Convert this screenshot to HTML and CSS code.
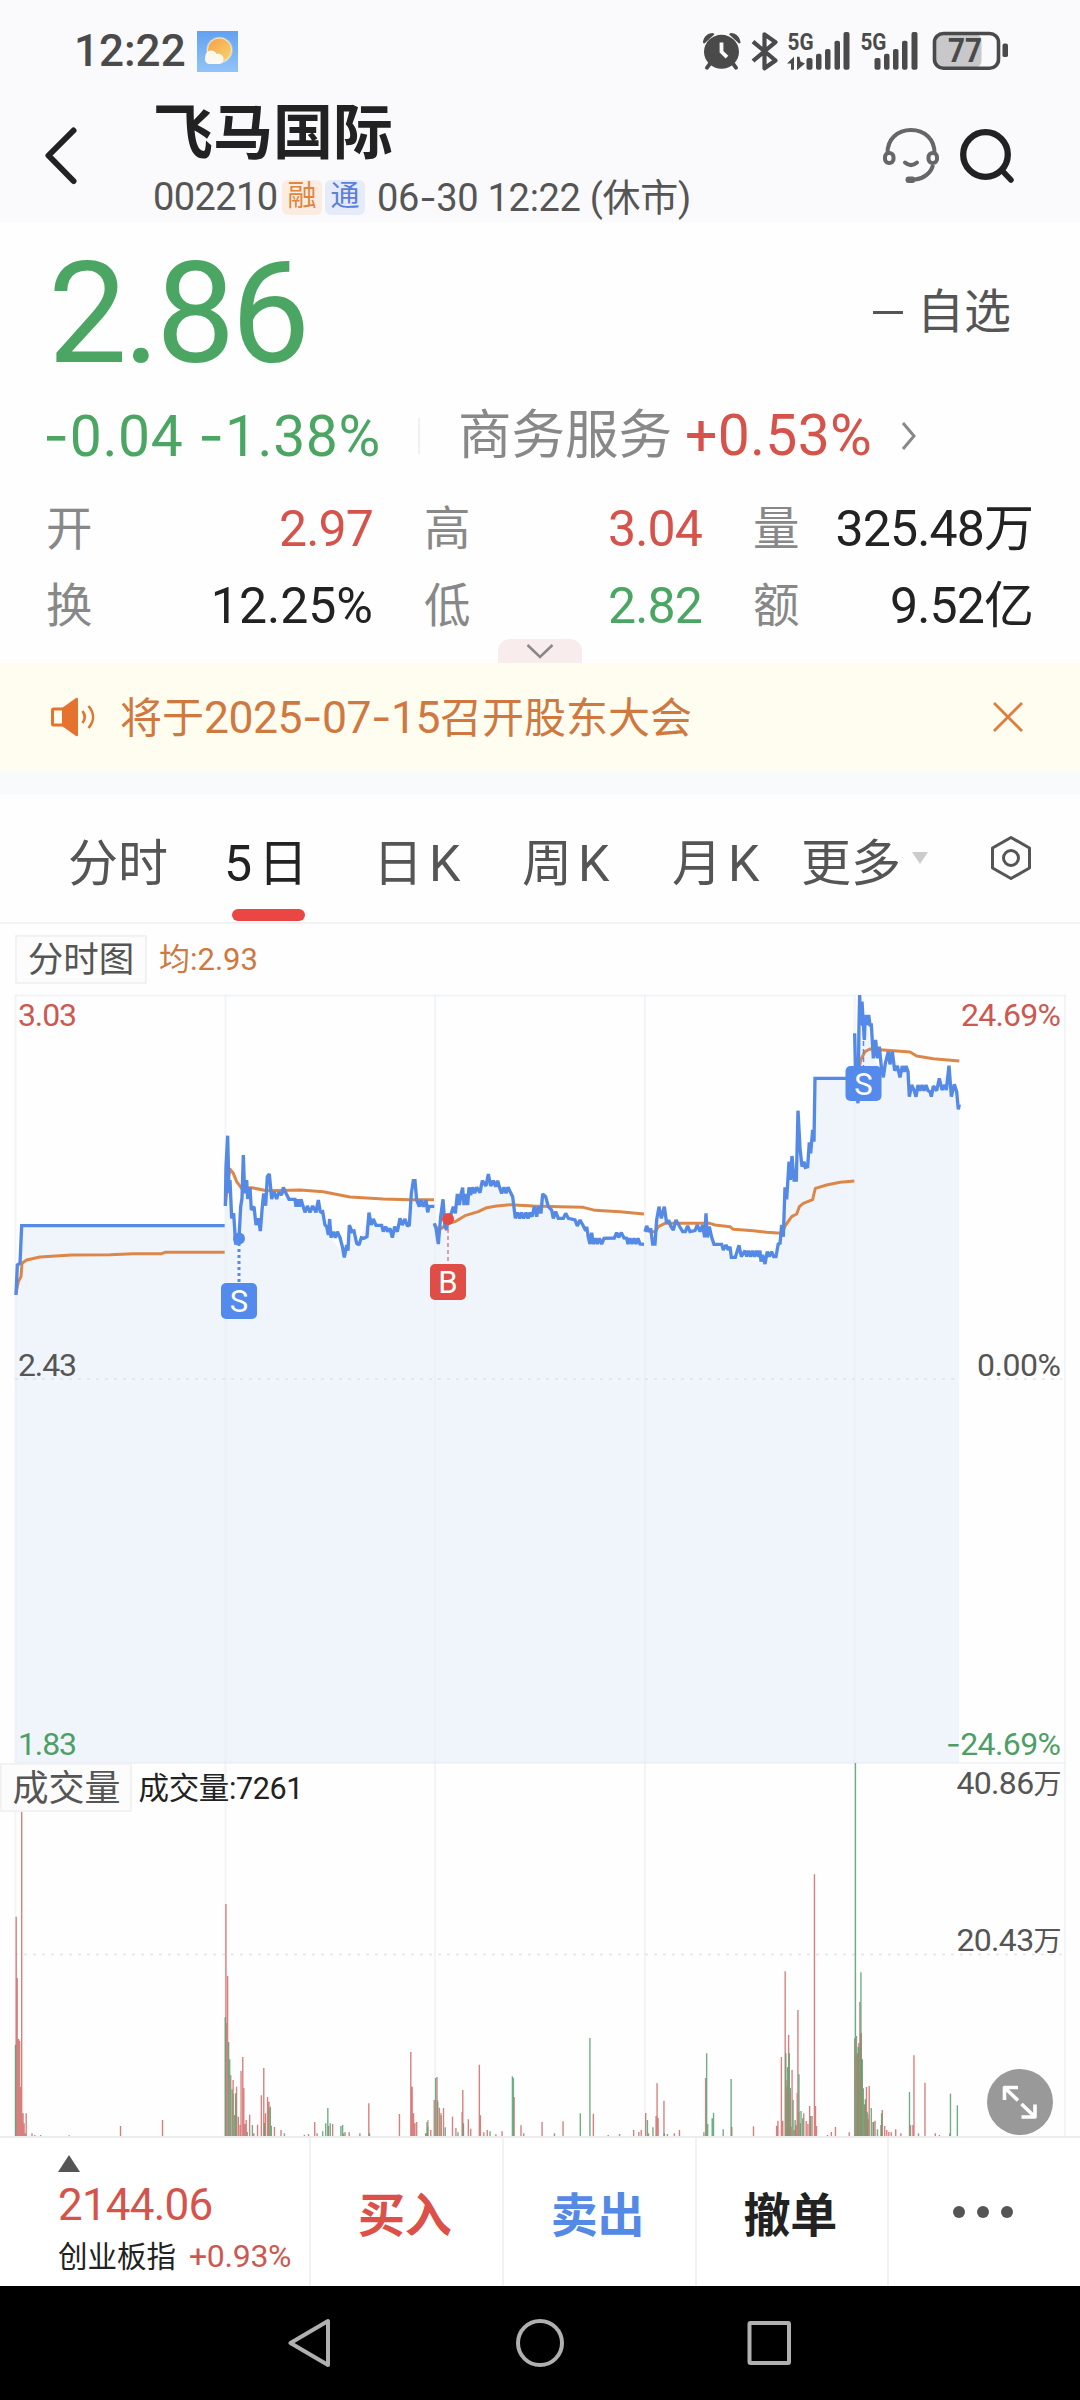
FILE: index.html
```html
<!DOCTYPE html>
<html lang="zh-CN">
<head>
<meta charset="utf-8">
<title>飞马国际 002210</title>
<link rel="stylesheet" href="styles.css">
</head>
<body>
<div class="app">
  <div class="statusbar">
    <span class="clock">12:22</span>
    <svg class="weather" width="41" height="41" viewBox="0 0 41 41">
      <defs>
        <linearGradient id="sky" x1="0" y1="0" x2="0" y2="1"><stop offset="0" stop-color="#62a1f0"/><stop offset="1" stop-color="#93c4f8"/></linearGradient>
        <linearGradient id="sun" x1="0" y1="0" x2="1" y2="1"><stop offset="0" stop-color="#f2a04c"/><stop offset="1" stop-color="#fbd56c"/></linearGradient>
      </defs>
      <rect width="41" height="41" fill="url(#sky)"/>
      <circle cx="22.500" cy="19" r="13.300" fill="#fff" opacity=".35"/>
      <circle cx="22.500" cy="19" r="12" fill="url(#sun)" stroke="#fde9b8" stroke-width="1"/>
      <path d="M12 33a4.500 4.500 0 0 1-4-5c0-5 2-8.500 6-8.500 3 0 4.500 1.500 5.500 3.500 4-1 7 2 7 5 0 3-2 5-5 5z" fill="#fdf8ee"/>
    </svg>
    <svg class="status-icons" width="308" height="71" viewBox="702 15 308 71">
      <g fill="#4a4a4a" transform="scale(1 .968)">
        <circle cx="722.500" cy="53.500" r="17.500"/>
        <path d="M704 44.500c0-6 4-10.500 10-10.500l1.500 1.500-10 9.500zM741.500 44.500c0-6-4-10.500-10-10.500l-1.500 1.500 10 9.500z"/>
        <path d="M711.500 65l-3.500 5M733.500 65l3.500 5" stroke="#4a4a4a" stroke-width="4" stroke-linecap="round"/>
        <path d="M722.500 44v9.500l5.500 5.500" fill="none" stroke="#fafafc" stroke-width="3.800"/>
        <path d="M754 43l22.500 19.500-11 8V35.500l11 8L754 63" fill="none" stroke="#4a4a4a" stroke-width="4.200" stroke-linejoin="round"/>
        <text class="net" x="788.500" y="51.500" textLength="26" lengthAdjust="spacingAndGlyphs">5G</text>
        <text class="net" x="861.500" y="51.500" textLength="26" lengthAdjust="spacingAndGlyphs">5G</text>
        <path d="M788 65.500l7-7v13.500h-3v-6.500zM806 65.500l-8 7V58.500h2.500l1 5z"/>
        <rect x="807.500" y="60" width="6" height="12" rx="2"/><rect x="817" y="55.500" width="5.500" height="16.500" rx="2"/><rect x="826" y="50.500" width="5.500" height="21.500" rx="2"/><rect x="835.500" y="42" width="5.500" height="30" rx="2"/><rect x="844.500" y="33" width="6" height="39" rx="2"/>
        <rect x="875.500" y="60" width="6" height="12" rx="2"/><rect x="885" y="55.500" width="5.500" height="16.500" rx="2"/><rect x="894" y="50.500" width="5.500" height="21.500" rx="2"/><rect x="903" y="42" width="5.500" height="30" rx="2"/><rect x="912.500" y="33" width="6" height="39" rx="2"/>
        <rect x="936" y="35" width="46.500" height="35" rx="7" fill="#c8c8ca"/>
        <rect x="935.500" y="34.500" width="64" height="36" rx="9" fill="none" stroke="#4a4a4a" stroke-width="3.600"/>
        <rect x="1003.500" y="45" width="5.500" height="14" rx="2"/>
        <text class="batt" x="949" y="64.500" textLength="34" lengthAdjust="spacingAndGlyphs">77</text>
      </g>
    </svg>
  </div>

  <header class="header">
    <svg class="back" width="34" height="60" viewBox="44 126 34 60"><path d="M73.500 130.500L48.500 155.500l25 25.500" fill="none" stroke="#222" stroke-width="6" stroke-linecap="round" stroke-linejoin="round"/></svg>
    <div class="heading">
      <h1 class="name">飞马国际</h1>
      <div class="meta"><span class="code">002210</span><span class="tag tag-orange">融</span><span class="tag tag-blue">通</span><span class="stamp">06<span class="dash">-</span>30 12:22 (休市)</span></div>
    </div>
    <svg class="tools" width="134" height="60" viewBox="882 126 134 60">
      <g fill="none" stroke="#666" stroke-width="4">
        <path d="M887.500 153c0-14 10-23 23.500-23s23.500 9 23.500 23"/>
        <rect x="885" y="153" width="8.500" height="10" rx="4"/><rect x="928.500" y="153" width="8.500" height="10" rx="4"/>
        <path d="M905 162.500c4 3.500 8 3.500 12 0" stroke-linecap="round"/>
        <path d="M933 165c-2 8-9 13.500-18 14.500"/>
      </g>
      <rect x="905.500" y="176.500" width="10" height="6.500" rx="3.200" fill="#666"/>
      <circle cx="985.500" cy="154.500" r="22.300" fill="none" stroke="#222" stroke-width="6.300"/>
      <path d="M1002.500 171l8.500 9" stroke="#222" stroke-width="5.500" stroke-linecap="round"/>
    </svg>
  </header>

  <section class="quote">
    <div class="price-row">
      <span class="price">2.86</span>
      <button class="watch"><i class="minus"></i>自选</button>
    </div>
    <div class="change-row">
      <span class="change down"><span class="dash">-</span>0.04 <span class="dash">-</span>1.38%</span>
      <i class="sep"></i>
      <span class="sector">商务服务</span>
      <span class="sector-change up">+0.53%</span>
      <svg width="18" height="32" viewBox="0 0 18 32"><path d="M3 3l11 13L3 29" fill="none" stroke="#888" stroke-width="3"/></svg>
    </div>
    <div class="stats">
      <div class="stat"><span class="label">开</span><span class="value up">2.97</span></div>
      <div class="stat"><span class="label">高</span><span class="value up">3.04</span></div>
      <div class="stat"><span class="label">量</span><span class="value">325.48万</span></div>
      <div class="stat"><span class="label">换</span><span class="value wide">12.25%</span></div>
      <div class="stat"><span class="label">低</span><span class="value down">2.82</span></div>
      <div class="stat"><span class="label">额</span><span class="value">9.52亿</span></div>
    </div>
    <div class="pull"><svg width="30" height="18" viewBox="0 0 30 18"><path d="M2.500 3L15 15 27.500 3" fill="none" stroke="#888" stroke-width="2.500"/></svg></div>
  </section>

  <section class="notice">
    <svg width="46" height="42" viewBox="50 696 46 42">
      <rect x="52.500" y="709" width="12" height="16" rx="1" fill="none" stroke="#e5732f" stroke-width="3"/>
      <path d="M62 708l14-10c1.500-.5 2 0 2 1.500v35c0 1.500-.5 2-2 1.500L62 726z" fill="#e5732f"/>
      <path d="M82.500 711c3 4 3 8 0 12M88.500 706c6 7 6 15 0 22" fill="none" stroke="#e5732f" stroke-width="2.600"/>
    </svg>
    <span class="notice-text">将于<span class="num">2025<span class="dash">-</span>07<span class="dash">-</span>15</span>召开股东大会</span>
    <svg class="close" width="32" height="32" viewBox="0 0 32 32"><path d="M2 2l28 28M30 2L2 30" stroke="#e07c3c" stroke-width="2.800"/></svg>
  </section>

  <nav class="tabs">
    <span class="tab">分时</span>
    <span class="tab active">5<b class="gap"></b>日</span>
    <span class="tab">日<b class="gap"></b>K</span>
    <span class="tab">周<b class="gap"></b>K</span>
    <span class="tab">月<b class="gap"></b>K</span>
    <span class="tab more">更多<i class="caret"></i></span>
    <svg class="gear" width="44" height="48" viewBox="989 834 44 48"><path d="M1011 837.500l18.500 10.500v20L1011 878.500 992.500 868v-20z" fill="none" stroke="#555" stroke-width="3" stroke-linejoin="round"/><circle cx="1011" cy="858" r="7.500" fill="none" stroke="#555" stroke-width="3"/></svg>
  </nav>

  <section class="legend">
    <span class="chip">分时图</span>
    <span class="avg">均:2.93</span>
  </section>

  <section class="chart">
    <svg width="1080" height="1142" viewBox="0 994 1080 1142">
      <g transform="translate(0 980) scale(.33333)" class="area">
        <path d="M46 2349V945L52 855 60 850 65 737H676V2349z"/>
        <path d="M676 2349V640L683 560 690 650 707 790 717 775 730 600 743 657 781 753 797 670 808 585 822 650 867 658 909 680 960 670 990 770 1033 825 1048 740 1075 793 1107 705 1125 736 1175 760 1205 725 1228 737 1240 605 1255 670 1304 679V2349z"/>
      </g>
      <g transform="translate(400 1100) scale(.33333)" class="area">
        <path d="M104 1989V385L115 432 129 310 140 388 172 300 207 275 265 235 330 275 346 350 395 345 428 290 460 350 530 365 570 425 656 412 734 433V1989z"/>
        <path d="M734 1989V395L762 430 777 330 820 380 918 390 942 433 994 465 1095 488 1128 465 1145 390 1155 280 1171 230 1188 240 1194 40 1206 200 1223 200 1242 125 1245-65H1363V1989z"/>
      </g>
      <g transform="translate(740 980) scale(.33333)" class="area">
        <path d="M343 2349V295L358 80 380 130 400 230 430 290 450 230 504 275 515 325 570 335 600 315 627 270 634 345 643 318 657 388V2349z"/>
      </g>

      <g class="grid">
        <path d="M15.500 995V2136M225.500 995V2136M435 995V2136M645 995V2136M854.700 995V2136M1065 995V2136"/>
        <path d="M15 995.500H1066M15 1763H1066"/>
        <path d="M15 1379H958M988 1379H1062M15 1954.500H1062" class="dashed"/>
      </g>

      <g class="avg-line">
        <path transform="translate(0 980) scale(.33333)" d="M48 940L55 905 63 890 66 850 80 840 120 831 215 825 330 824 400 821 485 821 495 817H674M676 675L684 600 690 568 700 580 710 605 725 625 755 623 800 632 900 630 970 635 1000 641 1050 651 1150 657 1230 659H1302"/>
        <path transform="translate(400 1100) scale(.33333)" d="M103 373L112 385 125 385 140 372 165 365 195 347 235 335 260 323 290 318 330 314 400 318 480 320 550 322 585 331 660 335 732 342M735 392L750 392 765 397 775 380 795 370H930L945 375 990 380 1000 388 1060 392 1100 397 1145 400 1157 375 1175 350 1190 342 1198 320 1210 310 1238 299 1241 285 1246 265 1280 255 1320 247 1363 243"/>
        <path transform="translate(740 980) scale(.33333)" d="M347 260L355 280 362 240 375 215 390 207 440 211 510 216 530 228 580 236 658 243"/>
      </g>

      <g class="price-line">
        <path transform="translate(0 980) scale(.33333)" d="M48 945L52 855 60 850 65 737H674"/>
        <path transform="translate(0 980) scale(.33333)" d="M676 678L678 560 683 467 687 640 690 600 695 715 701 700 707 793 717 775 722 680 726 655 730 525 734 640 740 600 743 657 750 622 754 690 762 680 768 735 775 715 781 753 787 680 791 640 797 677 802 590 808 582 815 657 822 635 830 657 836 638 845 645 850 622 858 640 867 658H885L888 680 893 658 898 680 903 658 909 678 915 697 922 678 930 697 938 678 948 697 955 660 961 697 968 695 975 735 980 740 985 765 989 717 993 773 1000 755 1006 773 1012 755 1020 773 1027 800 1033 832 1040 795 1044 812 1048 735 1056 755 1062 753 1070 790 1077 795 1084 773 1092 775 1101 770 1107 698 1114 735 1120 717 1128 736 1145 736 1150 755 1157 740 1163 755 1170 745 1177 773 1184 740 1192 755 1200 715 1207 735 1215 717 1222 738 1228 735 1234 640 1240 602 1245 602 1250 660 1258 680 1263 660 1270 680 1278 660 1283 697 1288 679H1303"/>
        <path transform="translate(400 1100) scale(.33333)" d="M103 370L108 385 115 432 122 350 129 298 135 380 140 390 145 350 152 345 160 320 166 340 172 282 178 315 183 282 188 263 192 315 197 282 203 315 207 262 212 285 218 262 224 280 230 262 240 278 247 242 258 258 265 222 272 258 280 242 287 260 293 242 298 260 305 280 312 262 318 280 324 262 332 278 338 290 346 355 353 338 359 355 365 338 371 355 378 338 384 355 390 338 396 350 403 320 410 350 415 320 423 340 428 282 437 290 445 320 455 330 460 355 467 335 475 355 490 355 497 340 505 355 525 360 532 378 540 360 550 378 557 392 560 380 565 412 570 432 575 398 580 432 587 415 592 432 598 415 605 432 612 415 643 414 650 398 656 412 664 398 672 414 680 415 684 432 690 415 696 432 702 415 708 432 714 415 720 432 732 433"/>
        <path transform="translate(400 1100) scale(.33333)" d="M735 395L740 378 748 395 752 385 758 432 765 432 770 360 777 320 784 355 793 320 800 370 806 360 812 378 820 390 828 360 838 378 848 395 856 395 863 378 870 395 885 392 892 375 900 395 908 375 914 412 918 340 922 412 928 380 935 412 942 433H965L970 450 978 435 985 450 990 440 994 472H1006L1017 436 1024 470 1035 452 1040 470 1046 452 1052 470 1058 452 1064 470 1070 452 1076 470 1080 452 1083 485 1088 465 1095 492 1102 455 1108 470 1115 455 1121 470 1128 470 1135 430 1140 432 1145 375 1150 410 1155 262 1160 298 1167 185 1171 240 1176 168 1182 240 1189 240 1194 32 1200 145 1206 200 1212 185 1216 202 1223 200 1228 127 1232 160 1238 90 1242 125 1245-65H1363"/>
        <path transform="translate(740 980) scale(.33333)" d="M344 160L347 295 354 370 357 135 359 45 362 130 366 65 370 130 373 180 376 105 380 135 386 105 390 135 394 135 400 235 407 180 412 235 418 200 424 260 430 292 436 250 445 215 450 253 457 215 464 272 472 258 480 292 487 258 493 275 498 258 504 275 508 350 515 315 522 330 528 350 534 315 540 332 546 315 552 332 558 315 564 332 570 335 574 350 580 318 590 332 598 295 606 330 614 315 619 330 627 257 634 350 643 313 650 335 655 388 658 373"/>
      </g>

      <g>
        <path d="M239 1243V1284" stroke="#548aeb" stroke-width="3" stroke-dasharray="3 3"/>
        <circle cx="239" cy="1238.500" r="6" fill="#548aeb"/>
        <rect x="221" y="1283" width="36" height="36" rx="5" fill="#548aeb"/>
        <text class="mark" x="239" y="1312">S</text>
        <path d="M448 1222V1264" stroke="#dc8086" stroke-width="1.500" stroke-dasharray="4 3"/>
        <circle cx="448" cy="1219" r="6" fill="#e04c46"/>
        <rect x="430" y="1264" width="36" height="36" rx="5" fill="#e04c46"/>
        <text class="mark" x="448" y="1293">B</text>
        <path d="M863.500 1025V1066" stroke="#548aeb" stroke-width="1.500" stroke-dasharray="5 3"/>
        <circle cx="863.500" cy="1020.500" r="5.500" fill="#548aeb"/>
        <rect x="845.500" y="1066" width="36" height="35" rx="5" fill="#548aeb"/>
        <text class="mark" x="863.500" y="1094.500">S</text>
      </g>

      <g class="vol" transform="translate(0 1720) scale(.34435 .33333)">
        <path class="r" d="M47 1248V590M50 1248V774M54 1248V957M57 1248V963M60 1248V1100M63 1248V268M67 1248V1180M70 1248V1210M76 1248V1180M73 1248V1240M93 1248V1240M101 1248V1245M350 1248V1218M472 1248V1200M656 1248V552M661 1248V768M659 1248V909M670 1248V1066M677 1248V1080M687 1248V1100M692 1248V1190M697 1248V1215M700 1248V1053M705 1248V1011M708 1248V1104M711 1248V1212M715 1248V1200M725 1248V1184M737 1248V1240M748 1248V1214M759 1248V1126M766 1248V1044M771 1248V1180M777 1248V1131M781 1248V1145M797 1248V1221M816 1248V1230M896 1248V1242M914 1248V1206M921 1248V1240M954 1248V1218M966 1248V1212M1002 1248V1236M1014 1248V1237M1045 1248V1240M1071 1248V1150M1160 1248V1182M1193 1248V996M1197 1248V1100M1201 1248V1180M1205 1248V1210M1210 1248V1206M1242 1248V1220M1251 1248V1230M1261 1248V1140M1269 1248V1071M1276 1248V1163M1281 1248V1186M1288 1248V1164M1314 1248V1190M1324 1248V1224M1344 1248V1110M1342 1248V1176M1360 1248V1198M1367 1248V1226M1392 1248V1034M1395 1248V1186M1405 1248V1237M1415 1248V1230M1440 1248V1243M1458 1248V1234M1493 1248V1131M1513 1248V1216M1521 1248V1240"/>
        <path class="g" d="M45 1248V974M118 1248V1245M201 1248V1246M654 1248V892M664 1248V966M667 1248V1018M674 1248V1108M681 1248V1185M684 1248V1120M718 1248V1236M733 1248V1215M768 1248V1209M785 1248V1160M788 1248V1217M826 1248V1240M884 1248V1244M937 1248V1234M946 1248V1210M952 1248V1164M959 1248V1210M990 1248V1218M995 1248V1215M998 1248V1240M1073 1248V1240M1240 1248V1206M1236 1248V1240M1265 1248V1074M1271 1248V1146M1293 1248V1222M1330 1248V1237M1346 1248V1210M1423 1248V1234M1488 1248V1069M1491 1248V1074"/>
      </g>
      <g class="vol" transform="translate(540 1720) scale(.34435 .33333)">
        <path class="r" d="M6 1248V1206M67 1248V1204M155 1248V1181M231 1248V1242M272 1248V1230M287 1248V1236M294 1248V1230M307 1248V1179M315 1248V1240M340 1248V1090M337 1248V1188M343 1248V1194M360 1248V1142M390 1248V1240M405 1248V1230M481 1248V1074M557 1248V1221M620 1248V1219M687 1248V1217M691 1248V1202M701 1248V1011M705 1248V1202M712 1248V754M722 1248V945M717 1248V1100M732 1248V1050M730 1248V1220M738 1248V1230M743 1248V1216M747 1248V1118M749 1248V870M756 1248V1210M766 1248V1180M773 1248V1203M778 1248V1212M783 1248V1158M790 1248V1188M797 1248V463M800 1248V1158M803 1248V1218M846 1248V1236M858 1248V1221M898 1248V1237M914 1248V955M922 1248V1000M926 1248V969M929 1248V846M933 1248V940M943 1248V1155M948 1248V1101M952 1248V1198M956 1248V1098M967 1248V1206M973 1248V1202M990 1248V1215M994 1248V1170M1001 1248V1218M1007 1248V1230M1013 1248V1236M1020 1248V1237M1033 1248V1228M1048 1248V1240M1076 1248V1215M1083 1248V1215M1086 1248V1006M1099 1248V1240M1118 1248V1088M1148 1248V1240M1160 1248V1245"/>
        <path class="g" d="M42 1248V1240M117 1248V1180M145 1248V954M198 1248V1245M312 1248V1200M328 1248V1222M361 1248V1240M370 1248V1242M476 1248V1237M484 1248V1000M487 1248V1212M500 1248V1195M504 1248V1178M532 1248V1228M555 1248V1077M714 1248V1000M719 1248V1042M724 1248V1000M727 1248V1104M735 1248V1140M741 1248V1200M752 1248V1063M758 1248V1173M763 1248V1195M786 1248V1188M835 1248V1245M916 1248V129M919 1248V948M924 1248V980M932 1248V757M936 1248V1018M939 1248V1105M945 1248V1138M950 1248V1175M962 1248V1164M969 1248V1206M980 1248V1228M992 1248V1180M1073 1248V1116M1192 1248V1121M1190 1248V1240M1212 1248V1156"/>
      </g>
      <g class="vol-mix">
        <path d="M233 2136V2094M236 2136V2100M269 2136V2108M428 2136V2120M437.500 2136V2100M441 2136V2113M787 2136V2080M790 2136V2094M799 2136V2112M857 2136V2056M859.500 2136V2048M862 2136V2078M864.500 2136V2104M868 2136V2114"/>
      </g>

      <rect x="1" y="1764" width="130" height="47" fill="#fcfcfc" stroke="#f2f2f2" stroke-width="2"/>
      <text class="lbl" x="12.500" y="1801" font-size="36" fill="#555">成交量</text>
      <text class="lbl" x="138.500" y="1799" font-size="30.500" textLength="165" lengthAdjust="spacing" fill="#222">成交量:7261</text>

      <g class="axis">
        <text x="18" y="1025.500" fill="#cc5850" textLength="59">3.03</text>
        <text x="18" y="1375.500" fill="#555" textLength="59">2.43</text>
        <text x="18" y="1754.500" fill="#4f9e66" textLength="59">1.83</text>
        <text x="961" y="1025.500" fill="#cc5850" textLength="100">24.69%</text>
        <text x="977" y="1375.500" fill="#555" textLength="84">0.00%</text>
        <text x="946" y="1754.500" fill="#4f9e66" textLength="115"><tspan class="dash">-</tspan>24.69%</text>
        <text x="956.500" y="1794" fill="#555" textLength="105">40.86<tspan font-size="28">万</tspan></text>
        <text x="956.500" y="1951" fill="#555" textLength="105">20.43<tspan font-size="28">万</tspan></text>
      </g>

      <g class="expand">
        <circle cx="1020" cy="2102" r="33" fill="#999"/>
        <path d="M1004.500 2100V2087.500H1018M1005.500 2088.500l12.500 12M1021.500 2117H1035V2104.500M1021.500 2104l12.500 12" fill="none" stroke="#fff" stroke-width="3.600" stroke-linejoin="round"/>
      </g>
    </svg>
  </section>

  <footer class="trade">
    <div class="index">
      <i class="tri"></i>
      <span class="index-val">2144.06</span>
      <span class="index-name">创业板指<span class="index-pct">+0.93%</span></span>
    </div>
    <button class="act buy">买入</button>
    <button class="act sell">卖出</button>
    <button class="act">撤单</button>
    <button class="act dots"><i></i><i></i><i></i></button>
  </footer>

  <div class="sysnav">
    <svg width="504" height="52" viewBox="288 2317 504 52"><g fill="none" stroke="#b0b0b0" stroke-width="4" stroke-linejoin="round"><path d="M328 2321v44L290.500 2343z"/><circle cx="540" cy="2343" r="22"/><rect x="749.500" y="2323" width="39.500" height="40" rx="1"/></g></svg>
  </div>
</div>
</body>
</html>
```
FILE: styles.css
```css
* { box-sizing: border-box; }
body { margin: 0; background: #fff; }
.app {
  width: 1080px; height: 2400px; overflow: hidden;
  display: flex; flex-direction: column;
  font-family: Roboto, "Noto Sans CJK SC", sans-serif;
  color: #222; background: #fefefe;
}
svg { display: block; flex: none; }
button { border: 0; background: none; padding: 0; font: inherit; color: inherit; }
i { font-style: normal; }
.dash { font-family: Inter, Roboto, sans-serif; }
.up { color: #d5534b; }
.down { color: #4ca663; }

.statusbar { height: 101px; padding: 0 71px 0 74px; display: flex; align-items: center; background: #fafafc; }
.weather { margin-top: 2px; }
.clock { font-size: 44px; font-weight: 500; line-height: 50px; color: #4a4a4a; width: 123px; white-space: nowrap; }
.status-icons { margin-left: auto; }
.net { font: 700 25px Roboto, sans-serif; }
.batt { font: 700 35px Roboto, sans-serif; }

.header { height: 121px; padding: 3px 64px 0 44px; display: flex; background: #fafafc; }
.back { margin-top: 22px; }
.heading { margin-left: 75px; flex: 1; display: flex; flex-direction: column; gap: 13px; }
.name { margin: 0; font-size: 60px; font-weight: 700; line-height: 60px; }
.meta { display: flex; align-items: center; height: 40px; font-size: 38px; color: #555; line-height: 40px; }
.code { width: 129px; letter-spacing: -.6px; }
.tag { width: 40px; height: 35px; margin-right: 3px; border-radius: 6px; font-size: 29px; line-height: 33px; text-align: center; }
.tag-orange { background: #faece1; color: #de8540; }
.tag-blue { background: #e5ebf9; color: #5a7fdc; }
.stamp { margin-left: 9px; white-space: nowrap; letter-spacing: -.3px; }
.tools { margin-top: 22px; }

.quote { height: 441px; display: flex; flex-direction: column; }
.price-row { height: 172px; padding: 6px 69px 0 48px; display: flex; align-items: center; justify-content: space-between; }
.price { margin-top: 5px; font-size: 141px; line-height: 160px; color: #4ca663; letter-spacing: -4.200px; }
.watch { display: flex; align-items: center; gap: 14px; margin-top: 2px; font-size: 47px; line-height: 50px; color: #555; }
.minus { width: 30px; height: 3px; background: #555; }
.change-row { height: 83px; padding: 1px 0 0 43px; display: flex; align-items: center; line-height: 60px; white-space: nowrap; }
.change { width: 375px; font-size: 57px; letter-spacing: .6px; }
.sep { width: 2px; height: 36px; background: #f0f0f0; }
.sector { margin-left: 38px; width: 227px; font-size: 53.500px; color: #888; }
.sector-change { width: 215px; font-size: 57px; letter-spacing: .3px; }
.stats {
  height: 160px; padding: 13px 45px 0 46px;
  display: grid; grid-template-columns: 327px 278px 280px; grid-template-rows: 77px 77px; column-gap: 51px;
  line-height: 50px; font-size: 50px; white-space: nowrap;
}
.stat { display: flex; align-items: center; justify-content: space-between; }
.label { font-size: 46.500px; color: #888; }
.value { letter-spacing: -.9px; }
.wide { letter-spacing: 0; }
.pull { width: 84px; height: 24px; margin: 2px auto 0; border-radius: 12px 12px 0 0; background: #f9ecec; display: flex; align-items: center; justify-content: center; }

.notice { height: 108px; padding: 0 56px 0 50px; display: flex; align-items: center; background: #fffdf0; }
.notice-text { margin: 2px 0 0 24px; flex: 1; font-size: 42px; line-height: 50px; color: #cf7840; white-space: nowrap; }
.num { font-size: 44.500px; letter-spacing: -.5px; }

.tabs { height: 153px; border-top: 24px solid #f9fafc; border-bottom: 2px solid #f2f2f4; padding: 0 47px 0 68px; display: flex; align-items: center; font-size: 50px; color: #555; line-height: 60px; }
.tab { position: relative; height: 100%; flex: none; width: 156px; display: flex; align-items: center; padding-top: 10px; white-space: nowrap; }
.tab:nth-child(3) { width: 149px; }
.tab:nth-child(4) { width: 150px; }
.tab:nth-child(5) { width: 129px; }
.gap { width: 6px; }
.active { color: #222; }
.tab.active { width: 149px; }
.active::after { content: ""; position: absolute; left: 8px; bottom: 1px; width: 73px; height: 12px; border-radius: 6px; background: #ea4744; }
.tab.more { width: 150px; }
.caret { margin-left: 11px; margin-top: -12px; border: 8px solid transparent; border-top: 12px solid #ccc; border-bottom: 0; }
.gear { margin-left: auto; margin-top: -2px; }

.legend { height: 70px; padding: 11px 15px 0; display: flex; gap: 12px; }
.chip { width: 132px; height: 49px; border: 2px solid #f2f2f2; background: #fcfcfc; font-size: 35.500px; line-height: 47px; color: #555; text-align: center; }
.avg { font-size: 31px; line-height: 49px; color: #cf7840; }

.chart { height: 1142px; }
.area { fill: #f0f5fc; }
.grid { fill: none; stroke: #e4e8f0; stroke-opacity: .45; stroke-width: 2; }
.dashed { stroke: #d8dde4; stroke-opacity: .8; stroke-width: 1.500; stroke-dasharray: 3 6; }
.price-line { fill: none; stroke: #548ae6; stroke-width: 10; stroke-linejoin: miter; stroke-miterlimit: 1.500; }
.avg-line { fill: none; stroke: #dc8747; stroke-width: 9; stroke-linejoin: round; }
.vol { fill: none; stroke-width: 4; stroke-opacity: .85; }
.r { stroke: #d16a66; }
.g { stroke: #55a071; }
.vol-mix { stroke: #9c8d68; stroke-width: 1.500; stroke-opacity: .7; }
.mark { font: 31px Roboto, sans-serif; fill: #fff; text-anchor: middle; }
.lbl { font-family: Roboto, "Noto Sans CJK SC", sans-serif; }
.axis { font-size: 32px; }

.trade { height: 150px; display: flex; background: #fff; border-top: 2px solid #ececec; }
.index { width: 309px; padding: 17px 0 0 58px; display: flex; flex-direction: column; white-space: nowrap; }
.tri { width: 22px; height: 17px; background: #555; clip-path: polygon(50% 0, 100% 100%, 0 100%); }
.index-val { margin-top: 11px; font-size: 44px; line-height: 44px; color: #d5534b; letter-spacing: -.8px; }
.index-name { margin-top: 11px; font-size: 29.500px; line-height: 36px; }
.index-pct { margin-left: 13px; font-size: 32px; letter-spacing: -.3px; color: #cc5850; }
.act { flex: 1; border-left: 2px solid #f2f2f2; font-size: 47px; font-weight: 700; line-height: 60px; padding: 8px 3px 0 0; color: #222; }
.buy { color: #dd5048; }
.sell { color: #5489e6; }
.dots { display: flex; align-items: center; justify-content: center; gap: 12px; padding: 0 3px 0 0; }
.dots i { width: 12px; height: 12px; border-radius: 50%; background: #555; }

.sysnav { height: 114px; background: #000; display: flex; align-items: center; justify-content: center; }
```
